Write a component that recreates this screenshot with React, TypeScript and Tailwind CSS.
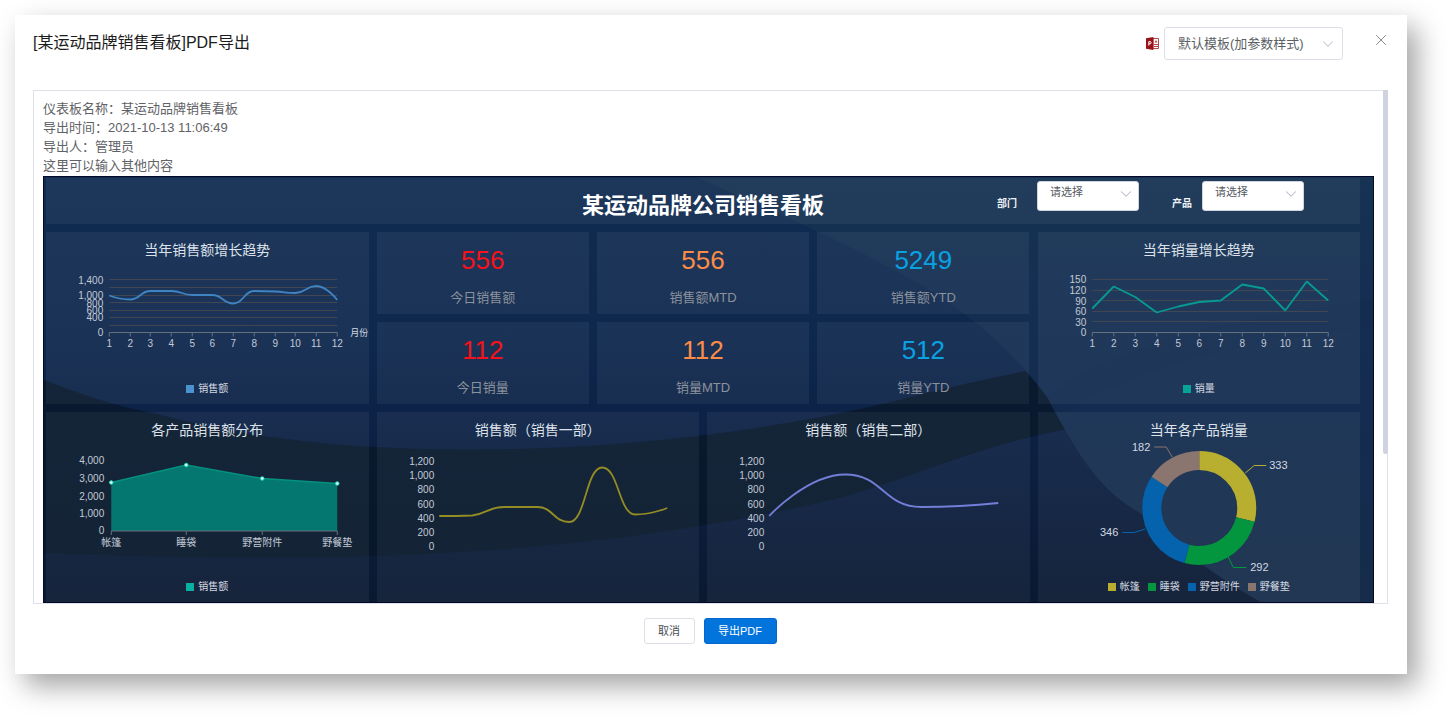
import React, { useState } from 'react';
import { ChevronDown, X } from 'lucide-react';

type Point = [number, number];

const kpis = [
  { value: '556', label: '今日销售额', color: 'text-[#f5121a]' },
  { value: '556', label: '销售额MTD', color: 'text-[#fb8c48]' },
  { value: '5249', label: '销售额YTD', color: 'text-[#0aa1e2]' },
  { value: '112', label: '今日销量', color: 'text-[#f5121a]' },
  { value: '112', label: '销量MTD', color: 'text-[#fb8c48]' },
  { value: '512', label: '销量YTD', color: 'text-[#0aa1e2]' },
];

const months = ['1', '2', '3', '4', '5', '6', '7', '8', '9', '10', '11', '12'];

const trendPoints: Point[] = [
  [63, 29.5], [84, 33.5], [104, 25], [125, 25], [146, 29], [166, 29],
  [187, 37.5], [208, 25], [229, 25.5], [249, 27], [270, 20], [291, 34],
];

const volumePoints: Point[] = [
  [54, 42.5], [75.5, 20.5], [97, 31], [118.5, 46.5], [140, 40.5], [161, 36],
  [182.5, 34.5], [204, 18.5], [225.5, 22.5], [247, 44.5], [268.5, 15.5], [290, 34.5],
];

const areaPoints: Point[] = [[65, 36.5], [140, 19], [216, 32.5], [291, 37.5]];

const deptOnePoints: Point[] = [
  [62, 70], [95, 69.5], [127, 61], [160, 61], [192, 76], [225, 21.5], [258, 68.5], [290, 62],
];

const deptTwoPoints: Point[] = [[62, 70], [138, 28.5], [214, 61], [291, 57]];

const donutSlices = [
  { name: '帐篷', value: 333, color: '#b8ae30', line: '207,27 216,19.5 228,19.5', x: 231, y: 23, anchor: 'start' as const },
  { name: '睡袋', value: 292, color: '#04953f', line: '190,111 195,121.5 208,121.5', x: 212, y: 125, anchor: 'start' as const },
  { name: '野营附件', value: 346, color: '#0563ae', line: '107,83 96,86.5 84,86.5', x: 80, y: 90, anchor: 'end' as const },
  { name: '野餐垫', value: 182, color: '#8a756f', line: '134,11 128,1 116,1', x: 112, y: 4.5, anchor: 'end' as const },
];

const donutTotal = donutSlices.reduce((sum, s) => sum + s.value, 0);

const toLine = (points: Point[]) => points.map((p) => p.join(',')).join(' ');

// Smooth curve whose control points never leave the range of their neighbours
const toSmooth = (points: Point[]) => {
  const slope = (i: number) => {
    if (i === 0 || i === points.length - 1) return 0;
    const before = points[i][1] - points[i - 1][1];
    const after = points[i + 1][1] - points[i][1];
    if (before * after <= 0) return 0;
    return (before + after) / (points[i + 1][0] - points[i - 1][0]);
  };
  const clamp = (v: number, a: number, b: number) =>
    Math.max(Math.min(a, b), Math.min(Math.max(a, b), v));

  let d = `M${points[0][0]} ${points[0][1]}`;
  for (let i = 1; i < points.length; i++) {
    const [x0, y0] = points[i - 1];
    const [x1, y1] = points[i];
    const h = (x1 - x0) / 2;
    const c0x = i === 1 ? x0 : x0 + h;
    const c0y = i === 1 ? y0 : clamp(y0 + slope(i - 1) * h, y0, y1);
    const c1x = i === points.length - 1 ? x1 : x1 - h;
    const c1y = i === points.length - 1 ? y1 : clamp(y1 - slope(i) * h, y0, y1);
    d += ` C${c0x} ${c0y} ${c1x} ${c1y} ${x1} ${y1}`;
  }
  return d;
};

const YLabels: React.FC<{ x: number; items: [string, number][] }> = ({ x, items }) => (
  <g fill="#c3cad6" fontSize="10" textAnchor="end">
    {items.map(([label, y]) => (
      <text key={label} x={x} y={y + 3.5}>{label}</text>
    ))}
  </g>
);

const XAxis: React.FC<{ xs: number[]; y: number; labels: string[] }> = ({ xs, y, labels }) => (
  <g>
    <path
      d={`M${xs[0]} ${y}H${xs[xs.length - 1]} ${xs.map((x) => `M${x} ${y}v4`).join(' ')}`}
      stroke="#66707f"
      fill="none"
    />
    <g fill="#c3cad6" fontSize="10" textAnchor="middle">
      {xs.map((x, i) => (
        <text key={labels[i]} x={x} y={y + 14.5}>{labels[i]}</text>
      ))}
    </g>
  </g>
);

const GridLines: React.FC<{ x1: number; x2: number; ys: number[] }> = ({ x1, x2, ys }) => (
  <path d={ys.map((y) => `M${x1} ${y}H${x2}`).join(' ')} stroke="#414651" fill="none" />
);

const Legend: React.FC<{ items: { name: string; color: string }[] }> = ({ items }) => (
  <ul className="h-8 pt-0.5 flex items-center justify-center gap-2 text-[10px] leading-4 text-[#d3d8e0]">
    {items.map((item) => (
      <li key={item.name} className="flex items-center gap-1">
        <span className="w-2 h-2" style={{ backgroundColor: item.color }} />
        {item.name}
      </li>
    ))}
  </ul>
);

const Panel: React.FC<{ title: string; children: React.ReactNode }> = ({ title, children }) => (
  <section className="col-span-3 min-w-0 bg-white/5">
    <h3 className="h-[34px] text-center text-sm leading-9 text-[#dde2ea]">{title}</h3>
    {children}
  </section>
);

const Backdrop: React.FC = () => (
  <svg
    className="absolute inset-0 w-full h-full"
    viewBox="0 0 1329 425"
    preserveAspectRatio="none"
    aria-hidden="true"
  >
    <defs>
      <linearGradient id="base" x1="0" y1="0" x2="0" y2="1">
        <stop offset="0" stopColor="#112c51" />
        <stop offset="0.4" stopColor="#0e274d" />
        <stop offset="0.6" stopColor="#0c2145" />
        <stop offset="1" stopColor="#0a1931" />
      </linearGradient>
      <linearGradient id="beam" x1="0" y1="0" x2="0" y2="1">
        <stop offset="0" stopColor="#163353" />
        <stop offset="0.5" stopColor="#132c50" />
        <stop offset="1" stopColor="#152c4a" />
      </linearGradient>
    </defs>
    <rect width="1329" height="425" fill="url(#base)" />
    <path
      d="M0 203 C50 222 80 231 110 236 C160 250 230 264 330 270 C480 278 660 268 843 226 C920 206 970 196 1100 170 V240 C960 256 900 290 806 318 C620 366 400 382 200 381 Q90 380 0 376Z"
      fill="#081727"
      opacity="0.75"
    />
    <path
      d="M630 -10 C720 30 790 60 856 96 C930 136 970 176 1003 220 C1040 290 1060 315 1096 336 C1140 376 1180 405 1219 426 H1329 V-10Z"
      fill="url(#beam)"
    />
    <path
      d="M1003 220 C1100 150 1230 140 1329 122 V150 C1220 160 1100 185 1015 238Z"
      fill="#10264a"
      opacity="0.25"
    />
  </svg>
);

const FilterSelect: React.FC<{ id: string; label: string; options: string[]; gap: string }> = ({
  id, label, options, gap,
}) => (
  <div className={`flex items-end ${gap}`}>
    <label htmlFor={id} className="text-[10px] leading-[15px] font-bold text-[#eef1f5]">{label}</label>
    <div className="relative">
      <select
        id={id}
        className="block appearance-none w-[102px] h-[30px] pl-3 pb-2 rounded-[3px] border border-[#cfd5df] bg-white text-[11px] text-[#55595f]"
      >
        <option>请选择</option>
        {options.map((o) => <option key={o}>{o}</option>)}
      </select>
      <ChevronDown size={18} strokeWidth={1.4} className="absolute right-1 top-1 text-[#b4bac6] pointer-events-none" />
    </div>
  </div>
);

const Dashboard: React.FC = () => (
  <div className="relative border border-[#040829] pt-px pl-[2px] pr-[13px]">
    <Backdrop />
    <div className="relative grid grid-cols-12 gap-2">
      <header className="col-span-12 h-[46px] grid grid-cols-[1fr_auto_1fr] items-start bg-white/5 pt-[3px]">
        <h2 className="col-start-2 text-[22px] leading-[50px] -mb-2 font-bold text-white">某运动品牌公司销售看板</h2>
        <div className="flex justify-end gap-[33px] pr-14">
          <FilterSelect id="dept" label="部门" options={['销售一部', '销售二部']} gap="gap-5" />
          <FilterSelect id="product" label="产品" options={['帐篷', '睡袋', '野营附件', '野餐垫']} gap="gap-[10px]" />
        </div>
      </header>

      <Panel title="当年销售额增长趋势">
        <svg viewBox="0 0 322 106" className="block w-full h-[106px] overflow-visible">
          <GridLines x1={63} x2={291} ys={[13.5, 21.5, 29.5, 36.5, 44.5, 51.5, 59.5]} />
          <YLabels x={57} items={[['1,400', 14], ['1,000', 29], ['800', 37], ['600', 44], ['400', 51], ['0', 66.5]]} />
          <XAxis xs={trendPoints.map((p) => p[0])} y={66.5} labels={months} />
          <text x="304" y="69.5" fontSize="9" fill="#d3d8e0">月份</text>
          <path d={toSmooth(trendPoints)} fill="none" stroke="#3f84c2" strokeWidth="1.8" />
        </svg>
        <Legend items={[{ name: '销售额', color: '#4b92d1' }]} />
      </Panel>

      <div className="col-span-6 grid grid-cols-3 gap-2">
        {kpis.map((kpi) => (
          <div key={kpi.label} className="bg-white/5 pt-[10px] text-center">
            <p className={`text-[26px] leading-9 ${kpi.color}`}>{kpi.value}</p>
            <p className="mt-[10px] text-[13px] leading-5 text-[#8c929b]">{kpi.label}</p>
          </div>
        ))}
      </div>

      <Panel title="当年销量增长趋势">
        <svg viewBox="0 0 322 106" className="block w-full h-[106px] overflow-visible">
          <GridLines x1={54} x2={290} ys={[13.5, 24.5, 34.5, 45.5, 55.5]} />
          <YLabels x={48} items={[['150', 13.5], ['120', 24.5], ['90', 35], ['60', 45.5], ['30', 56], ['0', 66.5]]} />
          <XAxis xs={volumePoints.map((p) => p[0])} y={66.5} labels={months} />
          <polyline points={toLine(volumePoints)} fill="none" stroke="#079a92" strokeWidth="1.8" strokeLinejoin="bevel" />
        </svg>
        <Legend items={[{ name: '销量', color: '#07a398' }]} />
      </Panel>

      <Panel title="各产品销售额分布">
        <svg viewBox="0 0 322 124" className="block w-full h-[124px] overflow-visible">
          <YLabels x={58} items={[['4,000', 14.5], ['3,000', 32.5], ['2,000', 50], ['1,000', 67.5], ['0', 84.5]]} />
          <polygon points={`65,85 ${toLine(areaPoints)} 291,85`} fill="#047770" />
          <polyline points={toLine(areaPoints)} fill="none" stroke="#04917f" strokeWidth="1.5" />
          <XAxis xs={areaPoints.map((p) => p[0])} y={85} labels={['帐篷', '睡袋', '野营附件', '野餐垫']} />
          {areaPoints.map(([x, y]) => (
            <circle key={x} cx={x} cy={y} r="1.8" fill="#e8fffb" stroke="#12d8b8" strokeWidth="1" />
          ))}
        </svg>
        <Legend items={[{ name: '销售额', color: '#07b0a0' }]} />
      </Panel>

      <Panel title="销售额（销售一部）">
        <svg viewBox="0 0 322 124" className="block w-full h-[124px] overflow-visible">
          <YLabels x={57} items={[['1,200', 15], ['1,000', 29.5], ['800', 43.5], ['600', 58], ['400', 72.5], ['200', 86.5], ['0', 100.5]]} />
          <path d={toSmooth(deptOnePoints)} fill="none" stroke="#938d24" strokeWidth="1.8" />
        </svg>
      </Panel>

      <Panel title="销售额（销售二部）">
        <svg viewBox="0 0 322 124" className="block w-full h-[124px] overflow-visible">
          <YLabels x={57} items={[['1,200', 15], ['1,000', 29.5], ['800', 43.5], ['600', 58], ['400', 72.5], ['200', 86.5], ['0', 100.5]]} />
          <path d={toSmooth(deptTwoPoints)} fill="none" stroke="#727fd8" strokeWidth="1.8" />
        </svg>
      </Panel>

      <Panel title="当年各产品销量">
        <svg viewBox="0 0 322 124" className="block w-full h-[124px] overflow-visible">
          {donutSlices.map((slice, i) => {
            const start = donutSlices.slice(0, i).reduce((sum, s) => sum + s.value, 0);
            return (
              <g key={slice.name}>
                <circle
                  cx="161"
                  cy="62"
                  r="47.5"
                  fill="none"
                  stroke={slice.color}
                  strokeWidth="19"
                  pathLength={donutTotal}
                  strokeDasharray={`${slice.value} ${donutTotal - slice.value}`}
                  strokeDashoffset={-start}
                  transform="rotate(-90 161 62)"
                />
                <polyline points={slice.line} fill="none" stroke={slice.color} />
                <text x={slice.x} y={slice.y} fontSize="11" fill="#d3d8e0" textAnchor={slice.anchor}>
                  {slice.value}
                </text>
              </g>
            );
          })}
        </svg>
        <Legend items={donutSlices} />
      </Panel>
    </div>
  </div>
);

const PdfIcon: React.FC = () => (
  <svg width="13" height="13" viewBox="0 0 13 13" aria-hidden="true">
    <path d="M7 1.5h5.5v10H7z" fill="#fff" stroke="#b5494e" strokeWidth="1" />
    <path d="M10 3l1.5 2.5H8.5z" fill="#b5494e" />
    <path d="M8 7.5h4M8 9.5h4" stroke="#b5494e" strokeWidth="1" />
    <path d="M0 1.2L7.4 0v13L0 11.8z" fill="#9b1118" />
    <path d="M2.8 8.6V4.6h1.2a1.1 1.1 0 0 1 0 2.2H2.8" fill="none" stroke="#fff" strokeWidth="1" />
  </svg>
);

const App: React.FC = () => {
  const [template, setTemplate] = useState('default');

  return (
    <main className="min-h-screen bg-white pt-[15px] pl-[15px] pr-[43px] font-['Liberation_Sans','Noto_Sans_CJK_SC',sans-serif]">
      <div
        role="dialog"
        aria-labelledby="export-title"
        className="bg-white pt-3 pl-[18px] pr-[19px] pb-[30px] shadow-[10px_12px_26px_rgba(0,0,0,0.36)]"
      >
        <div className="flex items-start pb-[30px]">
          <h1 id="export-title" className="text-base leading-8 text-[#1c1c1c]">[某运动品牌销售看板]PDF导出</h1>
          <div className="ml-auto flex items-center gap-[5px]">
            <PdfIcon />
            <div className="relative">
              <select
                aria-label="模板"
                value={template}
                onChange={(e) => setTemplate(e.target.value)}
                className="block appearance-none w-[179px] h-[33px] pl-[13px] rounded-[3px] border border-[#dcdfe6] bg-white text-[13px] text-[#5c5f65]"
              >
                <option value="default">默认模板(加参数样式)</option>
              </select>
              <ChevronDown size={18} strokeWidth={1.4} className="absolute right-[6px] top-2 text-[#bfc4ce] pointer-events-none" />
            </div>
          </div>
          <button type="button" aria-label="关闭" className="ml-[29px] -mr-[2px] h-[26px] text-[#85898f]">
            <X size={18} strokeWidth={1.3} />
          </button>
        </div>

        <div className="relative border border-[#dfe1e9] pt-2 pl-[9px] pr-[13px]">
          <div className="pb-px text-[13px] leading-[19px] text-[#5f6266]">
            <p>仪表板名称：某运动品牌销售看板</p>
            <p>导出时间：2021-10-13 11:06:49</p>
            <p>导出人：管理员</p>
            <p>这里可以输入其他内容</p>
          </div>
          <Dashboard />
          <div className="absolute -right-px -top-px w-[5px] h-[364px] rounded-b-sm bg-[#d0d3df]" />
        </div>

        <div className="mt-[14px] flex justify-center gap-[9px] pr-px text-[11px]">
          <button type="button" className="h-[26px] w-[51px] rounded-[3px] border border-[#dcdfe6] bg-white text-[#4b4e53]">
            取消
          </button>
          <button type="button" className="h-[26px] w-[73px] rounded-[3px] border border-[#0566cf] bg-[#0474dd] text-white">
            导出PDF
          </button>
        </div>
      </div>
    </main>
  );
};

export default App;
